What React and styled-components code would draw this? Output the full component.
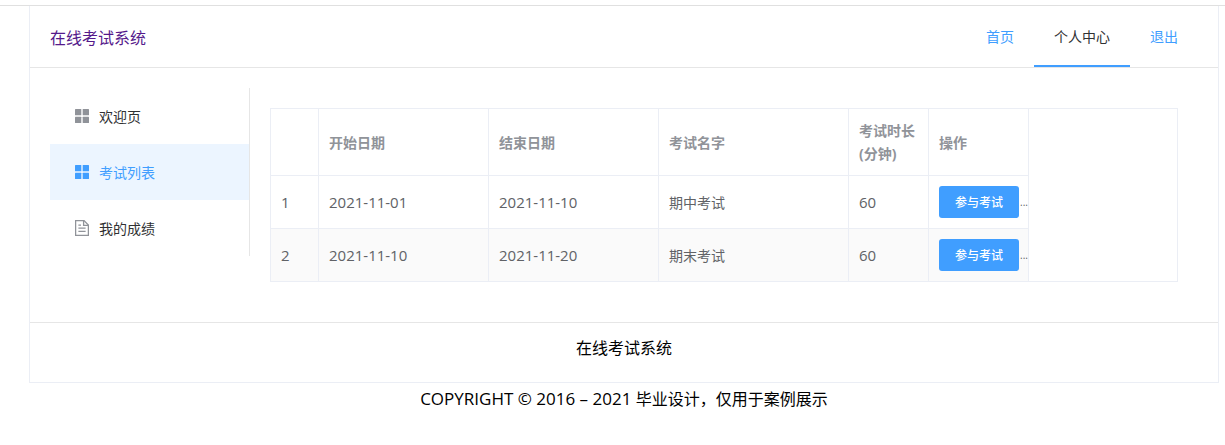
import React from "react";
import styled, { createGlobalStyle } from "styled-components";

const GlobalStyle = createGlobalStyle`
  html, body {
    margin: 0;
    padding: 0;
    background: #fff;
    font-family: "Open Sans", "Noto Sans CJK SC", sans-serif;
  }
  * { box-sizing: border-box; }
`;

const Page = styled.div`
  width: 1225px;
  height: 445px;
  padding: 5px 7px 0 29px;
  position: relative;
  overflow: hidden;
  &::before {
    content: "";
    position: absolute;
    left: 0;
    right: 0;
    top: 5px;
    height: 1px;
    background: #e0e0e0;
  }
`;

const Card = styled.div`
  width: 1190px;
  height: 377px;
  border: 1px solid #ebeef5;
  border-top: 0;
  margin-top: 1px;
  display: flex;
  flex-direction: column;
`;

const Header = styled.header`
  height: 62px;
  flex: none;
  border-bottom: 1px solid #e6e6e6;
  display: flex;
  align-items: center;
  justify-content: space-between;
  padding: 0 20px;
`;

const Brand = styled.a`
  color: #551a8b;
  font-size: 16px;
  line-height: 22px;
  margin-top: 3px;
`;

const Nav = styled.nav`
  display: flex;
  height: 61px;
`;

const NavItem = styled.a`
  padding: 0 20px;
  font-size: 14px;
  line-height: 62px;
  height: 61px;
  color: ${(p) => (p.$active ? "#303133" : "#409eff")};
  border-bottom: 2px solid ${(p) => (p.$active ? "#409eff" : "transparent")};
`;

const Body = styled.div`
  height: 255px;
  flex: none;
  display: flex;
  padding: 20px 20px 0;
  border-bottom: 1px solid #e6e6e6;
`;

const Side = styled.ul`
  width: 200px;
  height: 168px;
  margin: 0;
  padding: 0;
  list-style: none;
  border-right: 1px solid #e6e6e6;
`;

const SideItem = styled.li`
  height: 56px;
  padding-left: 25px;
  display: flex;
  align-items: center;
  gap: 10px;
  font-size: 14px;
  color: ${(p) => (p.$active ? "#409eff" : "#303133")};
  background: ${(p) => (p.$active ? "#ecf5ff" : "transparent")};
  svg { flex: none; }
`;

const Content = styled.main`
  flex: 1;
  padding: 20px 0 0 20px;
`;

const Table = styled.table`
  width: 908px;
  height: 174px;
  border-collapse: separate;
  border-spacing: 0;
  table-layout: fixed;
  border: 1px solid #ebeef5;
  font-size: 14px;
  color: #606266;
`;

const Th = styled.th`
  height: 67px;
  padding: 0 10px;
  text-align: left;
  font-weight: 700;
  color: #909399;
  font-size: 14px;
  line-height: 23px;
  border-right: 1px solid #ebeef5;
  border-bottom: 1px solid #ebeef5;
`;

const Filler = styled.td`
  border: 0;
  background: #fff;
`;

const Row = styled.tr`
  background: ${(p) => (p.$striped ? "#fafafa" : "#fff")};
`;

const Td = styled.td`
  height: ${(p) => (p.$last ? "52px" : "53px")};
  padding: 0 10px;
  border-right: 1px solid #ebeef5;
  border-bottom: ${(p) => (p.$last ? "0" : "1px solid #ebeef5")};
`;

const Num = styled.span`
  font-size: 15px;
`;

const ActionCell = styled.div`
  display: flex;
  align-items: center;
  width: 90px;
  height: 32px;
  overflow: hidden;
  white-space: nowrap;
`;

const JoinButton = styled.button`
  width: 80px;
  height: 32px;
  flex: none;
  border: 0;
  border-radius: 3px;
  background: #409eff;
  color: #fff;
  font-family: inherit;
  font-size: 12px;
  font-weight: 500;
  padding: 0;
`;

const More = styled.span`
  font-size: 10px;
  line-height: 12px;
  margin-left: 1px;
  color: #606266;
`;

const Footer = styled.footer`
  flex: 1;
  display: flex;
  align-items: center;
  justify-content: center;
  font-size: 16px;
  line-height: 22px;
  padding-bottom: 10px;
  color: #000;
`;

const Copyright = styled.div`
  text-align: center;
  width: 1190px;
  font-size: 16px;
  line-height: 22px;
  margin-top: 5px;
  color: #000;
`;

const Latin = styled.span`
  font-size: 17px;
`;

const GridIcon = ({ color }) => (
  <svg width="14" height="14" viewBox="0 0 14 14" fill={color}>
    <rect x="0" y="0" width="6.3" height="6.3" rx="0.5" />
    <rect x="7.7" y="0" width="6.3" height="6.3" rx="0.5" />
    <rect x="0" y="7.7" width="6.3" height="6.3" rx="0.5" />
    <rect x="7.7" y="7.7" width="6.3" height="6.3" rx="0.5" />
  </svg>
);

const DocIcon = () => (
  <svg width="14" height="16" viewBox="0 0 14 16" fill="none" stroke="#909399" strokeWidth="1.3">
    <path d="M.6.6h8.4l4.4 4.4v10.4H.6z" />
    <path d="M8.6.6v4.8h4.8M3.4 8.2h7.2M3.4 11.4h7.2M3.4 5.2h2.6" />
  </svg>
);

const exams = [
  { id: 1, start: "2021-11-01", end: "2021-11-10", name: "期中考试", minutes: 60 },
  { id: 2, start: "2021-11-10", end: "2021-11-20", name: "期末考试", minutes: 60 },
];

const columns = [48, 170, 170, 190, 80, 100, 148];

export default function App() {
  return (
    <Page>
      <GlobalStyle />
      <Card>
        <Header>
          <Brand>在线考试系统</Brand>
          <Nav>
            <NavItem>首页</NavItem>
            <NavItem $active>个人中心</NavItem>
            <NavItem>退出</NavItem>
          </Nav>
        </Header>
        <Body>
          <Side>
            <SideItem><GridIcon color="#909399" />欢迎页</SideItem>
            <SideItem $active><GridIcon color="#409eff" />考试列表</SideItem>
            <SideItem><DocIcon />我的成绩</SideItem>
          </Side>
          <Content>
            <Table>
              <colgroup>
                {columns.map((w, i) => (
                  <col key={i} style={{ width: w }} />
                ))}
              </colgroup>
              <thead>
                <tr>
                  <Th />
                  <Th>开始日期</Th>
                  <Th>结束日期</Th>
                  <Th>考试名字</Th>
                  <Th>考试时长<br />(分钟)</Th>
                  <Th>操作</Th>
                  <Filler />
                </tr>
              </thead>
              <tbody>
                {exams.map((exam, i) => (
                  <Row key={exam.id} $striped={i % 2 === 1}>
                    <Td $last={i === 1}><Num>{exam.id}</Num></Td>
                    <Td $last={i === 1}><Num>{exam.start}</Num></Td>
                    <Td $last={i === 1}><Num>{exam.end}</Num></Td>
                    <Td $last={i === 1}>{exam.name}</Td>
                    <Td $last={i === 1}><Num>{exam.minutes}</Num></Td>
                    <Td $last={i === 1}>
                      <ActionCell>
                        <JoinButton>参与考试</JoinButton>
                        <More>...</More>
                      </ActionCell>
                    </Td>
                    <Filler />
                  </Row>
                ))}
              </tbody>
            </Table>
          </Content>
        </Body>
        <Footer>在线考试系统</Footer>
      </Card>
      <Copyright><Latin>COPYRIGHT © 2016 – 2021 </Latin>毕业设计，仅用于案例展示</Copyright>
    </Page>
  );
}
